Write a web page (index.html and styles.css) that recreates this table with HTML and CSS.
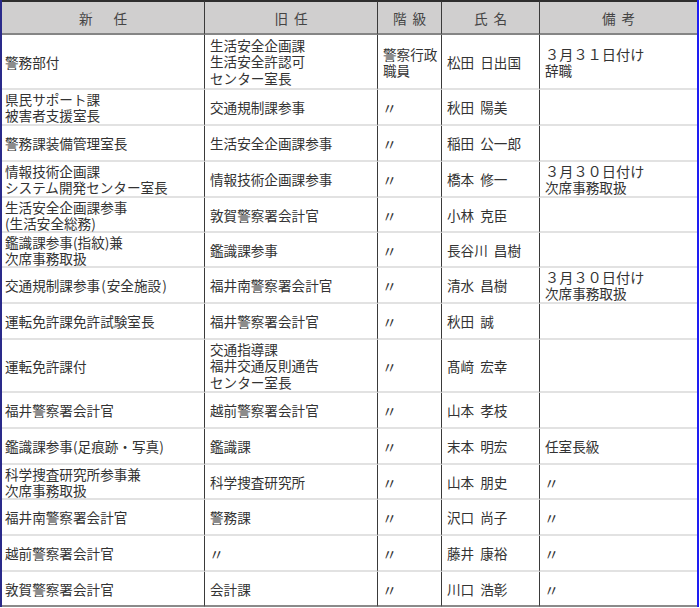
FILE: index.html
```html
<!DOCTYPE html>
<html lang="ja">
<head>
<meta charset="utf-8">
<title>人事異動</title>
<link rel="stylesheet" href="styles.css">
</head>
<body>
<div class="frame">
<table class="list">
<colgroup>
<col class="c1"><col class="c2"><col class="c3"><col class="c4"><col class="c5">
</colgroup>
<thead>
<tr class="head">
<th><span class="sp-wide">新</span>任</th>
<th><span class="sp">旧</span>任</th>
<th><span class="sp">階</span>級</th>
<th><span class="sp">氏</span>名</th>
<th><span class="sp">備</span>考</th>
</tr>
</thead>
<tbody>
<tr class="tall"><td>警務部付</td><td class="three">生活安全企画課<br>生活安全許認可<br>センター室長</td><td>警察行政<br>職員</td><td class="nm">松田 日出国</td><td class="note"><span class="big">３月３１日付け</span><br>辞職</td></tr>
<tr class="r36"><td>県民サポート課<br>被害者支援室長</td><td>交通規制課参事</td><td><span class="ditto">〃</span></td><td class="nm">秋田 陽美</td><td class="note"></td></tr>
<tr class="r36"><td>警務課装備管理室長</td><td>生活安全企画課参事</td><td><span class="ditto">〃</span></td><td class="nm">稲田 公一郎</td><td class="note"></td></tr>
<tr class="r36"><td>情報技術企画課<br>システム開発センター室長</td><td>情報技術企画課参事</td><td><span class="ditto">〃</span></td><td class="nm">橋本 修一</td><td class="note"><span class="big">３月３０日付け</span><br>次席事務取扱</td></tr>
<tr class="r35"><td>生活安全企画課参事<br>(生活安全総務)</td><td>敦賀警察署会計官</td><td><span class="ditto">〃</span></td><td class="nm">小林 克臣</td><td class="note"></td></tr>
<tr class="r35"><td>鑑識課参事(指紋)兼<br>次席事務取扱</td><td>鑑識課参事</td><td><span class="ditto">〃</span></td><td class="nm">長谷川 昌樹</td><td class="note"></td></tr>
<tr class="r36"><td>交通規制課参事<span class="par">(</span>安全施設<span class="par">)</span></td><td>福井南警察署会計官</td><td><span class="ditto">〃</span></td><td class="nm">清水 昌樹</td><td class="note"><span class="big">３月３０日付け</span><br>次席事務取扱</td></tr>
<tr class="r36"><td>運転免許課免許試験室長</td><td>福井警察署会計官</td><td><span class="ditto">〃</span></td><td class="nm">秋田 誠</td><td class="note"></td></tr>
<tr class="tall2"><td>運転免許課付</td><td class="three">交通指導課<br>福井交通反則通告<br>センター室長</td><td><span class="ditto">〃</span></td><td class="nm">髙﨑 宏幸</td><td class="note"></td></tr>
<tr class="r36"><td>福井警察署会計官</td><td>越前警察署会計官</td><td><span class="ditto">〃</span></td><td class="nm">山本 孝枝</td><td class="note"></td></tr>
<tr class="r36"><td>鑑識課参事(足痕跡・写真)</td><td>鑑識課</td><td><span class="ditto">〃</span></td><td class="nm">末本 明宏</td><td class="note">任室長級</td></tr>
<tr class="r35"><td>科学捜査研究所参事兼<br>次席事務取扱</td><td>科学捜査研究所</td><td><span class="ditto">〃</span></td><td class="nm">山本 朋史</td><td class="note"><span class="ditto">〃</span></td></tr>
<tr class="r36"><td>福井南警察署会計官</td><td>警務課</td><td><span class="ditto">〃</span></td><td class="nm">沢口 尚子</td><td class="note"><span class="ditto">〃</span></td></tr>
<tr class="r36"><td>越前警察署会計官</td><td><span class="ditto">〃</span></td><td><span class="ditto">〃</span></td><td class="nm">藤井 康裕</td><td class="note"><span class="ditto">〃</span></td></tr>
<tr class="last"><td>敦賀警察署会計官</td><td>会計課</td><td><span class="ditto">〃</span></td><td class="nm">川口 浩彰</td><td class="note"><span class="ditto">〃</span></td></tr>
</tbody>
</table>
</div>
</body>
</html>
```
FILE: styles.css
```css
html, body {
  margin: 0;
  padding: 0;
  background: #ffffff;
}
body {
  width: 700px;
  height: 608px;
  overflow: hidden;
  font-family: "Noto Sans CJK JP", "Noto Sans", sans-serif;
  font-size: 13.6px;
  color: #333333;
}
.frame {
  width: 699px;
  box-sizing: border-box;
  border-left: 2px solid #2a2a8a;
  border-right: 2px solid #1e1ef2;
}
.list {
  width: 695px;
  table-layout: fixed;
  border-collapse: separate;
  border-spacing: 0;
}
.c1 { width: 202px; }
.c2 { width: 173px; }
.c3 { width: 64px; }
.c4 { width: 98px; }
.c5 { width: 158px; }

.list th {
  height: 31px;
  padding: 0;
  background: #d0cfcf;
  border-top: 2px solid #2e2e2e;
  border-bottom: 2px solid #858585;
  font-weight: normal;
  color: #444444;
  text-align: center;
  vertical-align: middle;
  line-height: 16px;
}
.list th + th {
  border-left: 1px solid #3a3a3a;
}
.sp { margin-right: 6px; }
.sp-wide { margin-right: 21px; }

.list td {
  padding: 0 2px 0 5px;
  border-bottom: 2px solid #e2e2e2;
  vertical-align: middle;
  line-height: 16px;
  white-space: nowrap;
}
.list td.three { line-height: 16.5px; }
.list td:first-child {
  padding-left: 3px;
}
.list td + td {
  border-left: 1px solid #3a3a3a;
}
.list td.nm { word-spacing: 3px; }
.big { font-size: 14.2px; }
.par { margin: 0 1px; }

.ditto {
  display: inline-block;
  font-size: 15px;
  color: #333333;
  margin-left: -1px;
  transform: translateY(1px);
}

.tall td { height: 53px; }
.tall2 td { height: 51px; }
.r36 td { height: 34px; }
.r35 td { height: 33px; }
.last td {
  height: 33px;
  border-bottom: 2px solid #8a8a8a;
}
```
